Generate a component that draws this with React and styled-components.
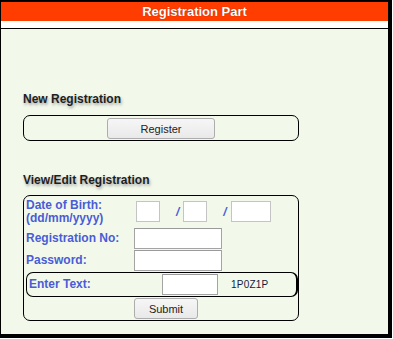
import React from 'react'
import styled, { createGlobalStyle } from 'styled-components'

const Global = createGlobalStyle`
  body {
    margin: 0;
    background: #ffffff;
    font-family: 'Liberation Sans', Arial, sans-serif;
  }
`

const Frame = styled.div`
  width: 387px;
  border-style: solid;
  border-color: #000;
  border-width: 2px 4px 4px 1px;
`

const Header = styled.div`
  height: 19px;
  line-height: 19px;
  background: #ff3d00;
  color: #fff;
  text-align: center;
  font-size: 13px;
  font-weight: bold;
  text-shadow: 0 0 1px #8a1a00;
`

const Strip = styled.div`
  height: 7px;
  background: #fff;
  border-bottom: 1px solid #000;
`

const Body = styled.div`
  height: 305px;
  box-sizing: border-box;
  background: #f2f9eb;
  padding: 63px 0 0 22px;
`

const Heading = styled.div`
  font-size: 12px;
  line-height: 14px;
  font-weight: bold;
  color: #1e1e1e;
  text-shadow: 1px 2px 3px #a0a0a0;
  margin-bottom: ${p => p.$gap}px;
`

const Box = styled.div`
  width: 274px;
  border: 1px solid #000;
  border-radius: 7px;
  display: flex;
  flex-direction: column;
  padding: ${p => p.$pad};
  margin-bottom: ${p => p.$after || 0}px;
`

const Button = styled.button`
  height: 21px;
  width: ${p => p.$w}px;
  box-sizing: border-box;
  margin: ${p => p.$m};
  padding: 0;
  background: linear-gradient(#f6f6f6, #e9e9e9);
  border: 1px solid #adadad;
  border-radius: 3px;
  font-family: 'Liberation Sans', Arial, sans-serif;
  font-size: 11px;
  color: #222;
`

const Row = styled.div`
  display: flex;
  align-items: center;
  height: ${p => p.$h}px;
`

const Label = styled.div`
  width: ${p => p.$w}px;
  box-sizing: border-box;
  padding-left: 2px;
  font-size: 12px;
  line-height: 13px;
  font-weight: bold;
  color: #4a5cd6;
  flex-shrink: 0;
`

const Input = styled.div`
  width: ${p => p.$w}px;
  height: ${p => p.$h || 21}px;
  box-sizing: border-box;
  background: #fff;
  border: 1px solid ${p => (p.$dark ? '#a4a4a4' : '#c4c4c4')};
  border-top-color: ${p => (p.$dark ? '#9a9a9a' : '#c4c4c4')};
  margin-left: ${p => p.$ml || 0}px;
  flex-shrink: 0;
`

const Slash = styled.span`
  font-size: 12px;
  font-weight: bold;
  font-style: italic;
  color: #4a5cd6;
  margin: 0 4px 0 16px;
`

const Inner = styled.div`
  height: 25px;
  box-sizing: border-box;
  margin-left: 2px;
  border: 1px solid #000;
  border-right-width: 2px;
  border-radius: 7px;
  display: flex;
  align-items: center;
`

const Captcha = styled.span`
  font-size: 10px;
  color: #141a40;
  margin-left: 13px;
  letter-spacing: 0.2px;
`

export default function App() {
  return (
    <>
      <Global />
      <Frame>
        <Header>Registration Part</Header>
        <Strip />
        <Body>
          <Heading $gap={9}>New Registration</Heading>
          <Box $pad="2px 0 1px 0" $after={32}>
            <Button $w={108} $m="0 auto">Register</Button>
          </Box>
          <Heading $gap={8}>View/Edit Registration</Heading>
          <Box $pad="0 0 1px 0">
            <Row $h={31}>
              <Label $w={110}>Date of Birth:<br />(dd/mm/yyyy)</Label>
              <Input $w={24} $ml={2} />
              <Slash>/</Slash>
              <Input $w={24} />
              <Slash>/</Slash>
              <Input $w={40} />
            </Row>
            <Row $h={22}>
              <Label $w={110}>Registration No:</Label>
              <Input $w={88} $h={21} $dark />
            </Row>
            <Row $h={23}>
              <Label $w={110}>Password:</Label>
              <Input $w={88} $h={21} $dark />
            </Row>
            <Inner>
              <Label $w={135}>Enter Text:</Label>
              <Input $w={56} $dark />
              <Captcha>1P0Z1P</Captcha>
            </Inner>
            <Button $w={64} $m="1px 0 0 110px">Submit</Button>
          </Box>
        </Body>
      </Frame>
    </>
  )
}
